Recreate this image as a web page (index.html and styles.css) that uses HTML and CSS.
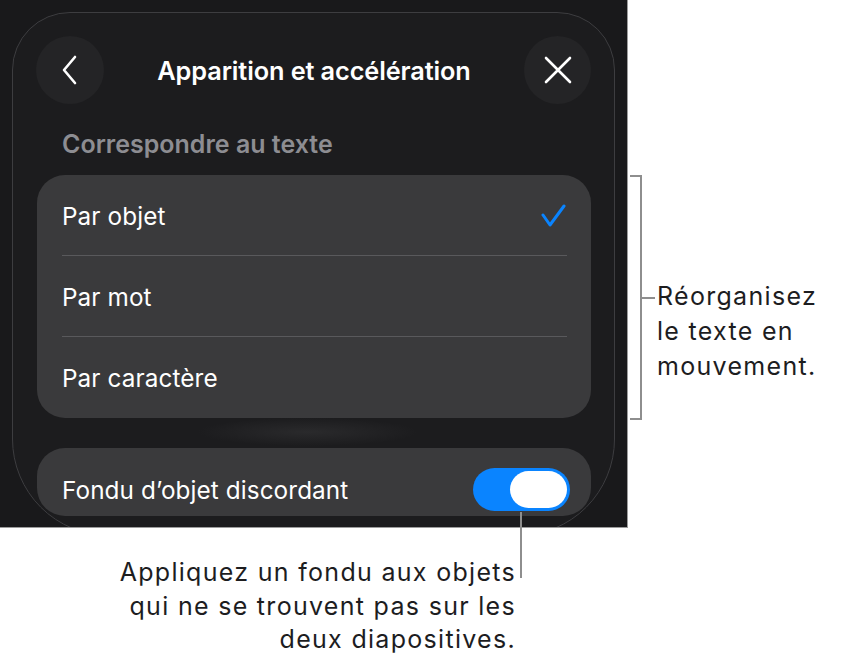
FILE: index.html
```html
<!DOCTYPE html>
<html>
<head>
    <title>Apparition et accélération</title>
    <link rel="stylesheet" href="styles.css">
</head>
<body>

<div class="figure">
    <!-- Sheet screenshot -->
    <div class="shot">
        <div class="sheet">
            <div class="nav">
                <button type="button" class="round-btn" aria-label="Retour">
                    <svg width="20" height="30" viewBox="0 0 20 30"><path d="M15 2 L4 15 L15 28" fill="none" stroke="#fff" stroke-width="2.6" stroke-linecap="round" stroke-linejoin="round"/></svg>
                </button>
                <h1>Apparition et accélération</h1>
                <button type="button" class="round-btn" aria-label="Fermer">
                    <svg width="30" height="30" viewBox="0 0 30 30"><path d="M3 3 L27 27 M27 3 L3 27" fill="none" stroke="#fff" stroke-width="2.6" stroke-linecap="round"/></svg>
                </button>
            </div>

            <h2 class="group-label">Correspondre au texte</h2>
            <ul class="group">
                <li class="row">Par objet
                    <svg class="check" width="26" height="24" viewBox="0 0 26 24"><path d="M2 11 L9 21 L23 2" fill="none" stroke="#0a84ff" stroke-width="3" stroke-linecap="round" stroke-linejoin="round"/></svg>
                </li>
                <li class="row">Par mot</li>
                <li class="row">Par caractère</li>
            </ul>

            <div class="group-gap"></div>

            <div class="group">
                <div class="row row-short">Fondu d’objet discordant
                    <span class="toggle on"><span class="knob"></span></span>
                </div>
            </div>
        </div>
    </div>

    <!-- Callouts -->
    <div class="side-note">
        <div class="bracket"></div>
        <p>Réorganisez<br>le texte en<br>mouvement.</p>
    </div>
    <p class="bottom-note">Appliquez un fondu aux objets<br>qui ne se trouvent pas sur les<br>deux diapositives.</p>
</div>

</body>
</html>
```

FILE: styles.css
```css
/* Page */
body {
    margin: 0;
    background: #fff;
    font-family: Inter, "Liberation Sans", sans-serif;
}
.figure {
    display: grid;
    grid-template-columns: 628px 1fr;
}

/* Dark screenshot frame */
.shot {
    width: 627px;
    height: 527px;
    background: #19191b;
    border-right: 1px solid #9c9c9c;
    border-bottom: 1px solid #9c9c9c;
    overflow: hidden;
}
.sheet {
    margin: 12px 0 0 12px;
    width: 601px;
    height: 522px;
    border: 1px solid #3d3d40;
    border-radius: 58px 58px 97px 97px;
    background: #1c1c1e;
}

/* Top bar */
.nav {
    display: flex;
    align-items: center;
    justify-content: space-between;
    padding: 23px 23px 0 23px;
}
.nav h1 {
    margin: 0;
    color: #fff;
    font-size: 25.3px;
    font-weight: 600;
    letter-spacing: -0.1px;
}
.round-btn {
    width: 68px;
    height: 68px;
    border: none;
    border-radius: 50%;
    background: #242426;
    display: flex;
    align-items: center;
    justify-content: center;
    padding: 0;
}
.round-btn:last-child {
    width: 67px;
}

/* Grouped list */
.group-label {
    margin: 28px 0 19px 49px;
    color: #8d8d92;
    font-size: 25px;
    font-weight: 600;
    line-height: 24px;
}
.group {
    list-style: none;
    margin: 0 23px 0 24px;
    padding: 0;
    background: #3a3a3c;
    border-radius: 28px;
}
.row {
    position: relative;
    display: flex;
    align-items: center;
    justify-content: space-between;
    height: 81px;
    padding: 0 23px 0 25px;
    color: #fff;
    font-size: 24.3px;
    letter-spacing: 0.1px;
}
.row + .row::before {
    content: "";
    position: absolute;
    top: -1px;
    left: 25px;
    right: 24px;
    height: 1px;
    background: #59595c;
}
.row-short {
    height: 53px;
    padding-top: 15px;
    padding-right: 21px;
}
.check {
    margin-right: 1px;
}
.group-gap {
    height: 30px;
    background: radial-gradient(ellipse 110px 14px at 295px 14px, #2a2a2c, rgba(28, 28, 30, 0));
}

/* Switch */
.toggle {
    position: relative;
    width: 97px;
    height: 43px;
    border-radius: 22px;
    background: #8e8e93;
}
.toggle.on {
    background: #0a84ff;
}
.toggle .knob {
    position: absolute;
    top: 3px;
    right: 3px;
    width: 57px;
    height: 37px;
    border-radius: 19px;
    background: #fff;
}

/* Callout texts and leader lines */
.side-note {
    display: flex;
    align-items: flex-start;
    padding-top: 175px;
}
.bracket {
    position: relative;
    flex: none;
    width: 10px;
    height: 241px;
    margin-left: 2px;
    border: 2px solid #8e8e8e;
    border-left: none;
}
.bracket::after {
    content: "";
    position: absolute;
    top: 120px;
    left: 12px;
    width: 13px;
    height: 2px;
    background: #8e8e8e;
}
.side-note p,
.bottom-note {
    margin: 0;
    color: #1d1d1f;
    font-size: 25px;
    letter-spacing: 1.3px;
    line-height: 35px;
}
.side-note p {
    margin: 104px 0 0 15px;
}
.bottom-note {
    position: relative;
    padding: 28px 112px 0 0;
    text-align: right;
    line-height: 33.5px;
}
.bottom-note::before {
    content: "";
    position: absolute;
    top: -16px;
    left: 520px;
    width: 2px;
    height: 66px;
    background: #8e8e8e;
}
```
